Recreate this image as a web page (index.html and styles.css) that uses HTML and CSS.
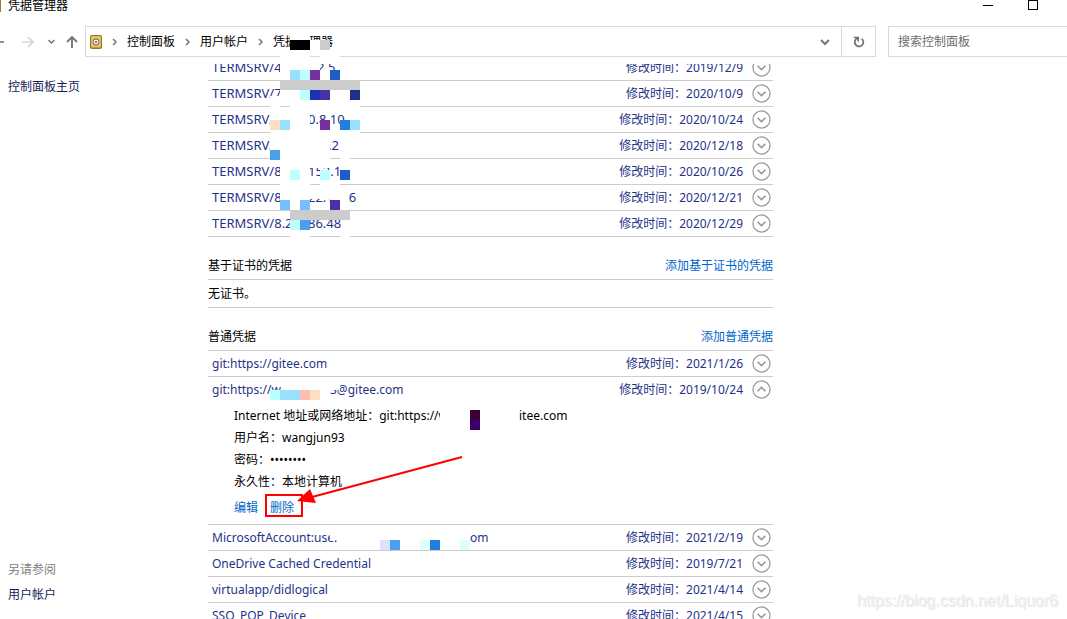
FILE: index.html
```html
<!DOCTYPE html>
<html lang="zh-CN">
<head>
<meta charset="utf-8">
<title>凭据管理器</title>
<link rel="stylesheet" href="styles.css">
</head>
<body>
<svg class="defs" aria-hidden="true">
  <symbol id="chev-down" viewBox="0 0 20 20"><circle cx="10" cy="10" r="9" fill="#fff" stroke="#999" stroke-width="1.3"/><path d="M5.8 8.2 10 12.2 14.2 8.2" fill="none" stroke="#999" stroke-width="1.7"/></symbol>
  <symbol id="chev-up" viewBox="0 0 20 20"><circle cx="10" cy="10" r="9" fill="#fff" stroke="#999" stroke-width="1.3"/><path d="M5.8 11.8 10 7.8 14.2 11.8" fill="none" stroke="#999" stroke-width="1.7"/></symbol>
  <symbol id="sep" viewBox="0 0 8 8"><path d="M2 1 5 4 2 7" fill="none" stroke="#777" stroke-width="1.5"/></symbol>
  <symbol id="drop" viewBox="0 0 10 8"><path d="M1 2 5 6 9 2" fill="none" stroke="#777" stroke-width="2"/></symbol>
</svg>
<header class="top">
  <div class="titlebar">
    <span class="app-mark"></span>
    <h1 class="title">凭据管理器</h1>
    <button class="win-btn" aria-label="最小化"><svg width="10" height="10"><path d="M0 5.5H10" stroke="#000"/></svg></button>
    <button class="win-btn" aria-label="最大化"><svg width="10" height="10"><rect x=".5" y=".5" width="9" height="9" fill="none" stroke="#000"/></svg></button>
  </div>
  <div class="navbar">
    <nav class="nav-buttons">
      <button class="nav-btn back" aria-label="后退"><svg width="5" height="12"><path d="M0 6H4" stroke="#777" stroke-width="1.6"/></svg></button>
      <button class="nav-btn forward" aria-label="前进"><svg width="12" height="12" fill="none" stroke="#d5d5d5" stroke-width="1.6"><path d="M0 6H11M6 1 11 6 6 11"/></svg></button>
      <button class="nav-btn recent" aria-label="最近"><svg width="7" height="6" fill="none" stroke="#777" stroke-width="1.5"><path d="M.5 1 3.5 4 6.5 1"/></svg></button>
      <button class="nav-btn" aria-label="向上"><svg width="12" height="12" fill="none" stroke="#777" stroke-width="1.9"><path d="M6 12V1M1 6 6 1 11 6"/></svg></button>
    </nav>
    <div class="address">
      <svg class="vault" width="12" height="14"><rect x=".5" y=".5" width="11" height="13" rx="1" fill="#c69a3d" stroke="#99702a"/><rect x="2" y="2" width="8" height="9" fill="#d9b75e" stroke="#efd78e"/><circle cx="6" cy="7" r="3" fill="#eee" stroke="#806a3a"/><circle cx="6" cy="7" r="1" fill="#706040"/></svg>
      <svg class="sep"><use href="#sep"/></svg><a class="crumb" href="#cp">控制面板</a>
      <svg class="sep"><use href="#sep"/></svg><a class="crumb" href="#users">用户帐户</a>
      <svg class="sep"><use href="#sep"/></svg><a class="crumb" href="#vault">凭据管理器</a>
      <button class="addr-drop" aria-label="历史"><svg width="10" height="8"><use href="#drop"/></svg></button>
      <button class="refresh" aria-label="刷新"><svg width="12" height="12" fill="none" stroke="#707070" stroke-width="1.7"><path d="M1 1.5H5.2V5.5M4.8 2A4.3 4.3 0 1 0 8.6 2.6"/></svg></button>
    </div>
    <input class="search" type="search" aria-label="搜索控制面板" placeholder="搜索控制面板">
  </div>
</header>
<div class="body">
  <aside class="side">
    <a class="side-link" href="#home">控制面板主页</a>
    <div class="also"><p class="also-title">另请参阅</p><a class="side-link" href="#users">用户帐户</a></div>
  </aside>
  <main class="pane">
    <div class="scrolled">
      <div class="servers">
      <div class="row"><a class="name" href="#r1"><span class="part wide">TERMSRV/4</span><span class="part">2.5</span></a><span class="time">修改时间：<span>2019/12/9</span></span><button class="toggle" aria-label="展开"><svg><use href="#chev-down"/></svg></button></div>
      <div class="row"><a class="name" href="#r2">TERMSRV/7</a><span class="time">修改时间：<span>2020/10/9</span></span><button class="toggle" aria-label="展开"><svg><use href="#chev-down"/></svg></button></div>
      <div class="row"><a class="name" href="#r3"><span class="part mid">TERMSRV/</span><span class="part">0.8.10</span></a><span class="time">修改时间：<span>2020/10/24</span></span><button class="toggle" aria-label="展开"><svg><use href="#chev-down"/></svg></button></div>
      <div class="row"><a class="name" href="#r4"><span class="part far">TERMSRV/</span><span class="part">.2</span></a><span class="time">修改时间：<span>2020/12/18</span></span><button class="toggle" aria-label="展开"><svg><use href="#chev-down"/></svg></button></div>
      <div class="row"><a class="name" href="#r5"><span class="part mid">TERMSRV/8</span><span class="part">153.1</span></a><span class="time">修改时间：<span>2020/10/26</span></span><button class="toggle" aria-label="展开"><svg><use href="#chev-down"/></svg></button></div>
      <div class="row"><a class="name" href="#r6"><span class="part mid">TERMSRV/8</span><span class="part">22.1126</span></a><span class="time">修改时间：<span>2020/12/21</span></span><button class="toggle" aria-label="展开"><svg><use href="#chev-down"/></svg></button></div>
      <div class="row"><a class="name" href="#r7"><span class="part mid">TERMSRV/8.2</span><span class="part">86.48</span></a><span class="time">修改时间：<span>2020/12/29</span></span><button class="toggle" aria-label="展开"><svg><use href="#chev-down"/></svg></button></div>
      </div>

      <div class="section"><h2 class="heading">基于证书的凭据</h2><a class="link" href="#addcert">添加基于证书的凭据</a></div>
      <p class="empty">无证书。</p>
      <div class="section"><h2 class="heading">普通凭据</h2><a class="link" href="#add">添加普通凭据</a></div>

      <div class="row"><a class="name" href="#g1">git:https://gitee.com</a><span class="time">修改时间：<span>2021/1/26</span></span><button class="toggle" aria-label="展开"><svg><use href="#chev-down"/></svg></button></div>
      <div class="row open"><a class="name" href="#g2"><span class="part repo">git:https://w</span><span class="part">3@gitee.com</span></a><span class="time">修改时间：<span>2019/10/24</span></span><button class="toggle" aria-label="折叠"><svg><use href="#chev-up"/></svg></button></div>
      <div class="details">
        <p class="detail"><span class="part target">Internet 地址或网络地址：git:https://w</span><span>itee.com</span></p>
        <p class="detail">用户名：wangjun93</p>
        <p class="detail">密码：••••••••</p>
        <p class="detail">永久性：本地计算机</p>
        <p class="actions"><a class="link" href="#edit">编辑</a><a class="link" href="#del">删除</a></p>
      </div>
      <div class="row"><a class="name" href="#g3"><span class="part account">MicrosoftAccount:use.</span><span class="part">om</span></a><span class="time">修改时间：<span>2021/2/19</span></span><button class="toggle" aria-label="展开"><svg><use href="#chev-down"/></svg></button></div>
      <div class="row"><a class="name" href="#g4">OneDrive Cached Credential</a><span class="time">修改时间：<span>2019/7/21</span></span><button class="toggle" aria-label="展开"><svg><use href="#chev-down"/></svg></button></div>
      <div class="row"><a class="name" href="#g5">virtualapp/didlogical</a><span class="time">修改时间：<span>2021/4/14</span></span><button class="toggle" aria-label="展开"><svg><use href="#chev-down"/></svg></button></div>
      <div class="row"><a class="name" href="#g6">SSO_POP_Device</a><span class="time">修改时间：<span>2021/4/15</span></span><button class="toggle" aria-label="展开"><svg><use href="#chev-down"/></svg></button></div>
    </div>
  </main>
</div>
<svg class="marks" width="1067" height="619" aria-hidden="true">
  <g fill="#fff">
    <path d="M290 30h20v10h-20zM310 40h10v10h-10zM280 50h30v14h-30zM320 50h20v14h-20z"/>
    <path d="M280 60h40v20h-40zM320 70h10v10h-10zM280 90h80v20h-70v-10h-10zM270 96h10v14h-10z"/>
    <path d="M270 110h40v10h-40zM290 120h20v10h-20zM270 130h90v10h-90zM340 110h20v5h-20z"/>
    <path d="M270 140h60v20h-60zM340 150h10v10h-10zM280 160h30v20h-30zM280 180h30v10h-30zM320 180h20v10h-20zM310 160h20v8h-20z"/>
    <path d="M280 190h30v20h-30zM310 190h20v9h-20zM330 190h18v20h-18zM310 203h20v7h-20zM290 220h20v20h-20zM340 230h10v10h-10z"/>
    <path d="M270 390h60v17h-60zM330 380h10v10h-10zM440 405h79v25h-79zM330 530h10v9h-10z"/>
  </g>
  <path fill="#ccc" d="M280 80h80v10h-80zM290 210h60v10h-60zM320 40h10v10h-10z"/>
  <path fill="#000" d="M290 40h20v10h-20z"/>
  <path fill="#99dfff" d="M290 70h10v10h-10zM280 120h10v10h-10zM350 120h10v10h-10zM280 390h20v10h-20z"/>
  <path fill="#bff" d="M300 70h10v10h-10zM300 90h10v10h-10zM290 170h10v10h-10zM320 170h10v10h-10zM290 220h10v10h-10zM270 390h10v10h-10z"/>
  <path fill="#75319e" d="M310 70h10v10h-10zM320 120h10v10h-10z"/>
  <path fill="#205cc8" d="M330 70h10v10h-10zM340 170h10v10h-10z"/>
  <path fill="#1f30b4" d="M310 90h10v10h-10z"/>
  <path fill="#4c30a8" d="M320 90h10v10h-10zM330 200h10v10h-10z"/>
  <path fill="#1d3088" d="M350 90h10v10h-10z"/>
  <path fill="#ffdfc4" d="M270 120h10v10h-10zM310 390h10v10h-10z"/>
  <path fill="#ffbfb0" d="M300 390h10v10h-10z"/>
  <path fill="#1f7fdc" d="M340 120h10v10h-10zM430 540h10v10h-10z"/>
  <path fill="#4b9feb" d="M270 150h10v10h-10zM300 220h10v10h-10zM390 540h10v10h-10z"/>
  <path fill="#75bfff" d="M280 200h10v10h-10zM300 200h10v10h-10z"/>
  <path fill="#dfdfff" d="M380 540h10v10h-10z"/>
  <path fill="#dff" d="M420 540h10v10h-10zM460 540h10v10h-10z"/>
  <path fill="#3b003b" d="M470 410h10v10h-10z"/>
  <path fill="#3b0068" d="M470 420h10v10h-10z"/>
  <rect x="266" y="495" width="36" height="21" fill="none" stroke="red" stroke-width="2"/>
  <path d="M462 457 312 497" stroke="red" stroke-width="2"/>
  <path d="M297 501 310 489 316 503z" fill="red"/>
</svg>
<div class="watermark">https://blog.csdn.net/Liquor6</div>
</body>
</html>
```
FILE: styles.css
```css
* { box-sizing: border-box; }
body {
  margin: 0;
  height: 100vh;
  overflow: hidden;
  position: relative;
  display: flex;
  flex-direction: column;
  background: #fff;
  color: #000;
  font: 12px/22px "Noto Sans", "Noto Sans CJK SC", sans-serif;
}
h1, h2, p { margin: 0; font-size: 12px; font-weight: 400; }
a { text-decoration: none; color: inherit; }
button { border: 0; padding: 0; margin: 0; background: none; display: flex; align-items: center; justify-content: center; }
.defs { display: none; }

.top { flex: none; height: 64px; }
.titlebar { height: 26px; display: flex; align-items: flex-start; }
.app-mark { width: 1px; height: 12px; background: #a87c30; margin-right: 7px; }
.title { flex: 1; line-height: 12px; }
.win-btn { width: 45px; height: 10px; }
.win-btn:last-child { margin-right: 12px; }
.navbar { height: 31px; display: flex; align-items: stretch; }
.nav-buttons { width: 85px; flex: none; display: flex; align-items: center; }
.nav-btn.back { margin-right: 17px; }
.nav-btn.forward { margin-right: 14px; }
.nav-btn.recent { margin-right: 11px; }
.address { flex: 1; display: flex; align-items: center; border: 1px solid #d9d9d9; padding-left: 4px; }
.sep { width: 8px; height: 8px; margin: 0 8px; }
.vault + .sep { margin-left: 9px; }
.crumb { white-space: nowrap; margin-right: 1px; line-height: 29px; }
.addr-drop { width: 32px; height: 29px; margin-left: auto; }
.refresh { width: 34px; height: 29px; border-left: 1px solid #d9d9d9; }
.search { width: 179px; height: 31px; margin-left: 12px; border: 1px solid #d9d9d9; border-right: 0; border-radius: 0; padding: 0 9px; font: inherit; color: #666; background: #fff; appearance: none; }
.search::placeholder { color: #6d6d6d; opacity: 1; }

.body { flex: 1; min-height: 0; display: flex; }
.side { width: 208px; flex: none; padding: 12px 8px 13px; display: flex; flex-direction: column; justify-content: space-between; }
.side-link { color: #151c55; }
.also-title { color: #808080; margin-bottom: 3px; }
.pane { flex: 1; max-width: 565px; overflow: hidden; }
.scrolled { margin-top: -9px; }
.row { height: 26px; display: flex; align-items: center; border-bottom: 1px solid #ccc; padding: 0 2px 0 4px; color: #1f3289; }
.row.open { border-bottom-color: transparent; }
.name { flex: 1; display: flex; white-space: nowrap; }
.servers .name { font-size: 13px; line-height: 20px; padding-bottom: 2px; }
.time { white-space: nowrap; margin-right: 9px; }
.toggle { width: 19px; height: 19px; }
.toggle svg { width: 19px; height: 19px; }
.part.mid { width: 96px; }
.part.wide { width: 105px; }
.part.far { width: 116px; }
.part.repo { width: 118px; }
.part.account { width: 258px; }
.part.target { display: inline-block; width: 285px; }
.section { display: flex; justify-content: space-between; align-items: center; height: 27px; margin-top: 16px; border-bottom: 1px solid #ccc; }
.link { color: #0066cc; }
.empty { height: 28px; line-height: 27px; border-bottom: 1px solid #ccc; }
.details { padding: 2px 0 0 26px; border-bottom: 1px solid #ccc; }
.detail { height: 22px; white-space: nowrap; }
.actions { display: flex; gap: 12px; height: 31px; line-height: 30px; }

.marks { position: absolute; left: 0; top: 0; pointer-events: none; }
.watermark { position: absolute; right: 9px; bottom: 7px; color: #f0f0f0; font: 16px/22px "Liberation Sans", sans-serif; text-shadow: 1px 1px 1px #e2e2e2; }
```
